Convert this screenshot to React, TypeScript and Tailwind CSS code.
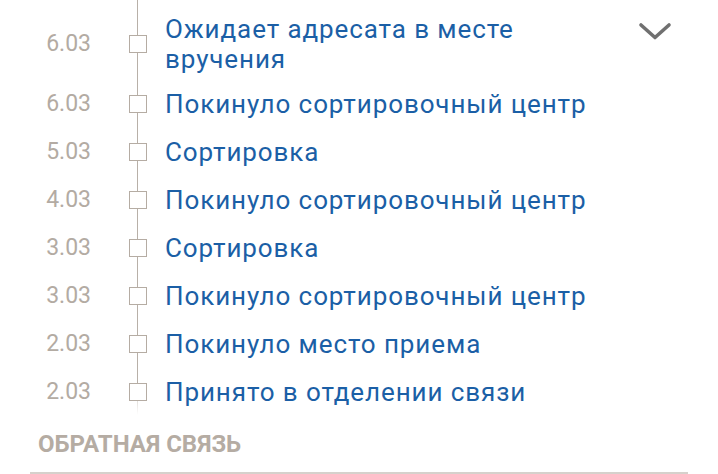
import React from 'react';

interface TrackEvent {
  date: string;
  title: string;
}

const events: TrackEvent[] = [
  { date: '6.03', title: 'Ожидает адресата в месте вручения' },
  { date: '6.03', title: 'Покинуло сортировочный центр' },
  { date: '5.03', title: 'Сортировка' },
  { date: '4.03', title: 'Покинуло сортировочный центр' },
  { date: '3.03', title: 'Сортировка' },
  { date: '3.03', title: 'Покинуло сортировочный центр' },
  { date: '2.03', title: 'Покинуло место приема' },
  { date: '2.03', title: 'Принято в отделении связи' },
];

const Chevron = () => (
  <svg width="34" height="18" viewBox="0 0 34 18" fill="none" className="shrink-0">
    <polyline
      points="3,3 17,15.5 31,3"
      stroke="#707070"
      strokeWidth="3.6"
      strokeLinecap="round"
      strokeLinejoin="round"
    />
  </svg>
);

const EventRow: React.FC<{ event: TrackEvent; first: boolean; last: boolean }> = ({ event, first, last }) => (
  <div className="flex items-center min-h-[48px] py-[6px]">
    <div className="w-[61px] text-right text-[23px] leading-[30px] text-[#b3aba3]">
      {event.date}
    </div>
    {/* timeline cell: connector line with a square marker */}
    <div className="relative ml-[19px] w-[55px] self-stretch -my-[6px] flex items-center justify-center">
      <div className="absolute left-[27px] top-0 h-1/2 w-px bg-[#b8b0a8]" />
      {last ? (
        <div className="absolute left-[27px] top-1/2 h-[23px] w-px bg-gradient-to-b from-[#d2ccc6] to-transparent" />
      ) : (
        <div className="absolute left-[27px] top-1/2 h-1/2 w-px bg-[#b8b0a8]" />
      )}
      <div className="relative w-[18px] h-[18px] border border-[#b5aca3] bg-white" />
    </div>
    <div className="flex-1 flex items-start">
      <div className="flex-1 text-[26px] leading-[30px] tracking-[0.9px] text-[#1b5fa6] pr-4">{event.title}</div>
      {first && (
        <div className="mt-[8px] mr-[16px]">
          <Chevron />
        </div>
      )}
    </div>
  </div>
);

export default function App() {
  return (
    <div className="w-[718px] h-[474px] overflow-hidden bg-white font-['Roboto',sans-serif]">
      <div className="px-[30px]">
        <div className="flex h-[8px]">
          <div className="w-[61px]" />
          <div className="relative ml-[19px] w-[55px]">
            <div className="absolute left-[27px] inset-y-0 w-px bg-[#b8b0a8]" />
          </div>
        </div>
        {events.map((event, i) => (
          <EventRow key={i} event={event} first={i === 0} last={i === events.length - 1} />
        ))}
        <div className="pt-[13px] pl-[8px] text-[24px] leading-[30px] font-bold text-[#b5aca3]">
          ОБРАТНАЯ СВЯЗЬ
        </div>
        <div className="mt-[13px] h-[2px] bg-[#d6d1cc]" />
      </div>
    </div>
  );
}
